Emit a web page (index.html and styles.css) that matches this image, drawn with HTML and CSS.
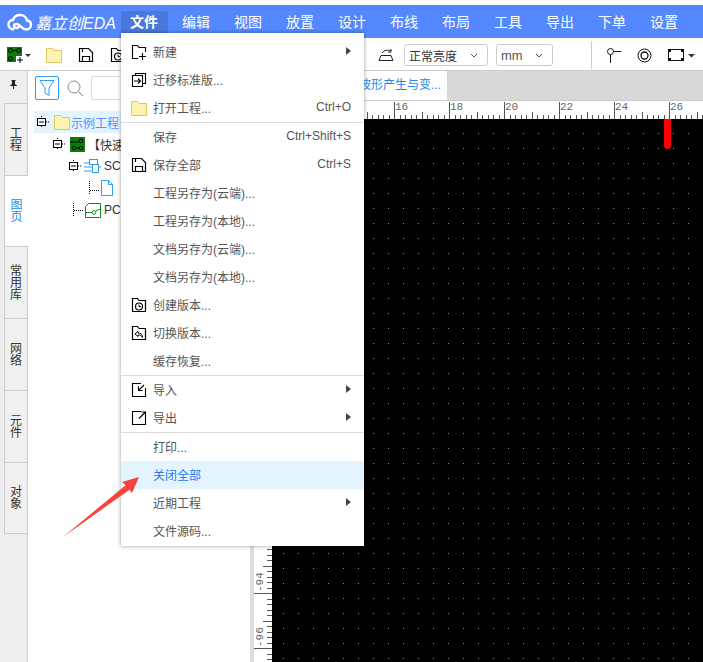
FILE: index.html
```html
<!DOCTYPE html>
<html lang="zh-CN">
<head>
    <meta charset="UTF-8">
    <title>嘉立创EDA</title>
    <link rel="stylesheet" href="styles.css">
</head>
<body>

    <svg class="defs" width="0" height="0">
        <defs>
            <symbol id="folder" viewBox="0 0 16 16">
                <path d="M.5 1.500h6l1.500 2h7.500v12H.5z" fill="#fdf3b0" stroke="#e0c565"/>
            </symbol>
            <symbol id="expander" viewBox="0 0 12 12">
                <path d="M4.500 0v2M4.500 10v2M9 6h3" stroke="#000" stroke-dasharray="1 1"/>
                <rect x=".5" y="2.500" width="8" height="7" fill="#fff" stroke="#000"/>
                <path d="M2 6h5" stroke="#000"/>
            </symbol>
            <symbol id="file-box" viewBox="0 0 16 16">
                <path d="M1.500 4V1.500h5l1.500 2h6.500v11H1.500z" fill="none" stroke="#000" stroke-width="1.200"/>
            </symbol>
            <symbol id="clock-box" viewBox="0 0 16 16">
                <use href="#file-box"/>
                <circle cx="8" cy="9.500" r="3.500" fill="none" stroke="#000" stroke-width="1.200"/>
                <path d="M8 7.500v2.200h2" fill="none" stroke="#000"/>
            </symbol>
            <symbol id="save" viewBox="0 0 16 16">
                <path d="M1.500 1.500h9l4 4v9h-13zM4.500 14.500v-5h7v5M4.500 2v3" fill="none" stroke="#000" stroke-width="1.200"/>
            </symbol>
            <pattern id="ticks-h" width="55" height="18" patternUnits="userSpaceOnUse" x="30">
                <path d="M.5 1v17M6 14v4M11.500 14v4M17 14v4M22.500 14v4M28 11v7M33.500 14v4M39 14v4M44.500 14v4M50 14v4" stroke="#555" fill="none" shape-rendering="crispEdges"/>
            </pattern>
            <pattern id="ticks-v" width="18" height="55" patternUnits="userSpaceOnUse" y="34">
                <path d="M0 .5h18M13 6h5M13 11.500h5M13 17h5M13 22.500h5M9 28h9M13 33.500h5M13 39h5M13 44.500h5M13 50h5" stroke="#555" fill="none" shape-rendering="crispEdges"/>
            </pattern>
            <pattern id="grid-dots" width="15" height="15" patternUnits="userSpaceOnUse" x="11" y="14">
                <rect width="1" height="1" fill="#888"/>
            </pattern>
        </defs>
    </svg>

    <div class="topbar">
        <div class="logo">
            <svg class="logo-cloud" width="26" height="18" viewBox="0 0 26 18">
                <path d="M7 16.500c-3 0-5.500-2-5.500-5s2.200-4.500 4.500-4.500c1-3 3.500-5 7-5 3.800 0 6.500 2.500 7 5.500 2.200.3 4 2 4 4.300 0 2.500-2 4.700-5 4.700-4 0-6-5.500-9.500-5.500-1.500 0-2.500 1-2.500 2s1 2 2.500 2c1 0 2-.5 3-1.500" fill="none" stroke="#fff" stroke-width="2.400"/>
            </svg>
            <span class="logo-text">嘉立创EDA</span>
        </div>
        <nav class="main-menu">
            <span class="main-item active">文件</span>
            <span class="main-item">编辑</span>
            <span class="main-item">视图</span>
            <span class="main-item">放置</span>
            <span class="main-item">设计</span>
            <span class="main-item">布线</span>
            <span class="main-item">布局</span>
            <span class="main-item">工具</span>
            <span class="main-item">导出</span>
            <span class="main-item">下单</span>
            <span class="main-item">设置</span>
        </nav>
    </div>

    <div class="toolbar">
        <div class="tool-group">
            <svg width="24" height="16" viewBox="0 0 24 16">
                <rect width="15" height="15" fill="#0a7d0a"/>
                <circle cx="3.500" cy="3.500" r="2" fill="none" stroke="#000"/>
                <circle cx="11.500" cy="3.500" r="2" fill="none" stroke="#000"/>
                <circle cx="3.500" cy="11.500" r="2" fill="none" stroke="#000"/>
                <path d="M5.500 3.500h4" stroke="#000"/>
                <rect x="9" y="9" width="8" height="7" fill="#fff"/>
                <path d="M10 13h6M13 10v6" stroke="#000"/>
                <path d="M18 7h6l-3 3z" fill="#333"/>
            </svg>
            <svg class="tool-folder" width="16" height="16"><use href="#folder"/></svg>
            <svg class="tool-save" width="16" height="16"><use href="#save"/></svg>
            <svg class="tool-save" width="16" height="16"><use href="#clock-box"/></svg>
        </div>
        <div class="tool-group right">
            <svg width="16" height="14" viewBox="0 0 16 14">
                <path d="M1 12.500h14l-2-5H3zM4 5c2-3 6-3.500 9-2M13 1v3h-3" fill="none" stroke="#222"/>
            </svg>
            <span class="tool-select brightness">正常亮度<svg class="chev" width="8" height="5" viewBox="0 0 8 5"><path d="M1 1l3 3 3-3" fill="none" stroke="#555"/></svg></span>
            <span class="tool-select unit">mm<svg class="chev" width="8" height="5" viewBox="0 0 8 5"><path d="M1 1l3 3 3-3" fill="none" stroke="#555"/></svg></span>
            <span class="tool-sep"></span>
            <svg class="tool-pin" width="16" height="16" viewBox="0 0 16 16">
                <circle cx="4.500" cy="4.500" r="3" fill="none" stroke="#111"/>
                <path d="M7.500 4.500H15M4.500 7.500V16" stroke="#111"/>
            </svg>
            <svg class="tool-via" width="15" height="15" viewBox="0 0 15 15">
                <circle cx="7.500" cy="7.500" r="6.500" fill="none" stroke="#111"/>
                <circle cx="7.500" cy="7.500" r="3.500" fill="none" stroke="#111" stroke-width="1.300"/>
            </svg>
            <svg class="tool-frame" width="27" height="13" viewBox="0 0 27 13">
                <rect x=".5" y=".5" width="15" height="11" fill="none" stroke="#111"/>
                <path d="M1 1h2v2H1zM13 1h2v2h-2zM1 9h2v2H1zM13 9h2v2h-2z" fill="#111"/>
                <path d="M20 5h7l-3.500 3.500z" fill="#333"/>
            </svg>
        </div>
    </div>

    <div class="workspace">
        <aside class="side-tabs">
            <div class="pin-row">
                <svg width="7" height="9" viewBox="0 0 7 9"><path d="M1.500 0h4v1l-.5.500V4L7 5.500V6H4v3H3V6H0v-.5L2 4V1.500L1.500 1z" fill="#222"/></svg>
            </div>
            <div class="side-tab">工程</div>
            <div class="side-tab active">图页</div>
            <div class="side-tab">常用库</div>
            <div class="side-tab">网络</div>
            <div class="side-tab">元件</div>
            <div class="side-tab">对象</div>
        </aside>

        <section class="tree-panel">
            <div class="tree-tools">
                <span class="filter-btn">
                    <svg width="16" height="18" viewBox="0 0 16 18"><path d="M1 1.500h14L10 9v7.500L6 14V9z" fill="none" stroke="#2f9bf5"/></svg>
                </span>
                <svg class="search-icon" width="17" height="17" viewBox="0 0 17 17">
                    <circle cx="7" cy="7" r="6" fill="none" stroke="#888"/>
                    <path d="M11.500 11.500L16 16" stroke="#888"/>
                </svg>
                <span class="search-box"></span>
            </div>
            <ul class="tree">
                <li class="tree-row level-0 selected">
                    <svg class="exp" width="12" height="12"><use href="#expander"/></svg>
                    <svg width="16" height="16"><use href="#folder"/></svg>
                    <span class="tree-name">示例工程</span>
                </li>
                <li class="tree-row level-1">
                    <svg class="exp" width="12" height="12"><use href="#expander"/></svg>
                    <svg width="15" height="15" viewBox="0 0 15 15">
                        <rect width="15" height="15" fill="#0a7d0a"/>
                        <circle cx="4" cy="11" r="1.800" fill="none" stroke="#000"/>
                        <circle cx="11" cy="4" r="1.800" fill="none" stroke="#000"/>
                        <circle cx="11" cy="11" r="1.800" fill="none" stroke="#000"/>
                        <path d="M0 5h9M6 11h3" stroke="#000"/>
                    </svg>
                    <span class="tree-name">【快速</span>
                </li>
                <li class="tree-row level-2">
                    <svg class="exp" width="12" height="12"><use href="#expander"/></svg>
                    <svg width="17" height="16" viewBox="0 0 17 16">
                        <rect x="5.500" y="1.500" width="8" height="5" fill="none" stroke="#2f9bf5"/>
                        <rect x="8.500" y="6.500" width="6" height="8" fill="none" stroke="#2f9bf5"/>
                        <path d="M0 5h5M0 9h8M0 13h8M14.500 9H17" stroke="#2f9bf5"/>
                    </svg>
                    <span class="tree-name">SC</span>
                </li>
                <li class="tree-row level-3">
                    <svg width="10" height="14" viewBox="0 0 10 14"><path d="M.5 0v14M1 9.500h9" stroke="#000" stroke-dasharray="1 1"/></svg>
                    <svg width="12" height="16" viewBox="0 0 12 16"><path d="M.5.500h7l4 4v11H.5zM7.500.500v4h4" fill="none" stroke="#2f9bf5"/></svg>
                </li>
                <li class="tree-row level-4">
                    <svg width="10" height="14" viewBox="0 0 10 14"><path d="M.5 0v14M1 7.500h9" stroke="#000" stroke-dasharray="1 1"/></svg>
                    <svg width="16" height="15" viewBox="0 0 16 15">
                        <path d="M.5 3.500l3-3h12v14H.5z" fill="none" stroke="#0a8a1a"/>
                        <circle cx="9" cy="9.500" r="1.800" fill="none" stroke="#0a8a1a"/>
                        <path d="M.5 9.500H7M11 8l4-2" stroke="#0a8a1a"/>
                    </svg>
                    <span class="tree-name pc">PC</span>
                </li>
            </ul>
        </section>

        <div class="splitter"></div>

        <section class="editor">
            <div class="doc-tabs">
                <span class="doc-tab">波形产生与变...</span>
            </div>
            <div class="ruler-top">
                <svg width="449" height="18">
                    <rect width="449" height="18" fill="url(#ticks-h)"/>
                    <text x="141" y="9">16</text>
                    <text x="196" y="9">18</text>
                    <text x="251" y="9">20</text>
                    <text x="306" y="9">22</text>
                    <text x="361" y="9">24</text>
                    <text x="416" y="9">26</text>
                </svg>
            </div>
            <div class="canvas-row">
                <div class="ruler-left">
                    <svg width="18" height="543">
                        <rect width="18" height="543" fill="url(#ticks-v)"/>
                        <text transform="translate(9 473) rotate(-90)">-94</text>
                        <text transform="translate(9 528) rotate(-90)">-96</text>
                    </svg>
                </div>
                <div class="canvas">
                    <svg class="canvas-grid" width="431" height="543">
                        <rect width="431" height="543" fill="url(#grid-dots)"/>
                    </svg>
                    <span class="marker"></span>
                </div>
            </div>
        </section>
    </div>

    <div class="file-menu">
        <div class="menu-row">
            <svg class="menu-icon" width="16" height="16" viewBox="0 0 16 16">
                <path d="M7 14.500H1.500v-13h5l1.500 2h6.500V8M8 12.500h7M11.500 9v7" fill="none" stroke="#000" stroke-width="1.100"/>
            </svg>
            <span class="menu-label">新建</span><span class="menu-arrow"></span>
        </div>
        <div class="menu-row">
            <svg class="menu-icon" width="16" height="16" viewBox="0 0 16 16">
                <path d="M4.500 3.500v-2h10v10h-3M1.500 3.500h10v11h-10zM3 9h6M7 6.500L9.500 9 7 11.500" fill="none" stroke="#000" stroke-width="1.100"/>
            </svg>
            <span class="menu-label">迁移标准版...</span>
        </div>
        <div class="menu-row">
            <svg class="menu-icon" width="16" height="16"><use href="#folder"/></svg>
            <span class="menu-label">打开工程...</span><span class="menu-key">Ctrl+O</span>
        </div>
        <div class="menu-sep"></div>
        <div class="menu-row">
            <span class="menu-label">保存</span><span class="menu-key">Ctrl+Shift+S</span>
        </div>
        <div class="menu-row">
            <svg class="menu-icon" width="16" height="16"><use href="#save"/></svg>
            <span class="menu-label">保存全部</span><span class="menu-key">Ctrl+S</span>
        </div>
        <div class="menu-row"><span class="menu-label">工程另存为(云端)...</span></div>
        <div class="menu-row"><span class="menu-label">工程另存为(本地)...</span></div>
        <div class="menu-row"><span class="menu-label">文档另存为(云端)...</span></div>
        <div class="menu-row"><span class="menu-label">文档另存为(本地)...</span></div>
        <div class="menu-row">
            <svg class="menu-icon" width="16" height="16"><use href="#clock-box"/></svg>
            <span class="menu-label">创建版本...</span>
        </div>
        <div class="menu-row">
            <svg class="menu-icon" width="16" height="16" viewBox="0 0 16 16">
                <use href="#file-box"/>
                <path d="M7 6.500L4 9l3 2.500V10c2 0 3.500.5 4.500 2.500 0-3-1.500-4.500-4.500-4.500z" fill="none" stroke="#000"/>
            </svg>
            <span class="menu-label">切换版本...</span>
        </div>
        <div class="menu-row"><span class="menu-label">缓存恢复...</span></div>
        <div class="menu-sep"></div>
        <div class="menu-row">
            <svg class="menu-icon" width="16" height="16" viewBox="0 0 16 16">
                <path d="M10 1.500H1.500v13h13V6M13 3L7.500 8.500M7.500 4.500v4h4" fill="none" stroke="#000" stroke-width="1.100"/>
            </svg>
            <span class="menu-label">导入</span><span class="menu-arrow"></span>
        </div>
        <div class="menu-row">
            <svg class="menu-icon" width="16" height="16" viewBox="0 0 16 16">
                <path d="M10 1.500H1.500v13h13V6M8 8.500L14 2.500M10.500 2H14.500v4" fill="none" stroke="#000" stroke-width="1.100"/>
            </svg>
            <span class="menu-label">导出</span><span class="menu-arrow"></span>
        </div>
        <div class="menu-sep"></div>
        <div class="menu-row"><span class="menu-label">打印...</span></div>
        <div class="menu-row hover"><span class="menu-label">关闭全部</span></div>
        <div class="menu-row"><span class="menu-label">近期工程</span><span class="menu-arrow"></span></div>
        <div class="menu-row"><span class="menu-label">文件源码...</span></div>
    </div>

    <svg class="callout" width="80" height="64" viewBox="0 0 80 64">
        <path d="M0 61L62.600 9.200 59 6 76 1 69 17 66.400 13.800z" fill="#f8423c"/>
    </svg>

</body>
</html>
```

FILE: styles.css
```css
* {
    box-sizing: border-box;
}
html, body {
    height: 100%;
}
body {
    margin: 0;
    padding-top: 5px;
    overflow: hidden;
    background: #fff;
    color: #444;
    font-family: "Liberation Sans", "Noto Sans CJK SC", sans-serif;
    font-size: 12px;
    position: relative;
}
svg {
    display: block;
    flex: none;
}
.defs {
    position: absolute;
}

/* top menu */
.topbar {
    height: 33px;
    background: #5588ff;
    display: flex;
    color: #fff;
    overflow: hidden;
}
.logo {
    width: 121px;
    flex: none;
    padding-left: 7px;
    display: flex;
    align-items: center;
    gap: 2px;
}
.logo-text {
    font-size: 16px;
    font-style: italic;
    white-space: nowrap;
}
.main-menu {
    display: flex;
    gap: 5px;
    padding-top: 6px;
}
.main-item {
    width: 47px;
    height: 22px;
    flex: none;
    line-height: 22px;
    padding-left: 9px;
    font-size: 14px;
}
.main-item.active {
    background: #4a78dc;
    font-weight: bold;
    border-radius: 2px 2px 0 0;
}

/* toolbar */
.toolbar {
    height: 33px;
    border-bottom: 1px solid #ccc;
    display: flex;
    align-items: center;
    justify-content: space-between;
    padding: 2px 8px 0 7px;
}
.tool-group {
    display: flex;
    align-items: center;
}
.tool-folder {
    margin-left: 15px;
}
.tool-save {
    margin-left: 16px;
}
.tool-select {
    height: 22px;
    border: 1px solid #ccc;
    border-radius: 3px;
    display: flex;
    align-items: center;
    justify-content: space-between;
    padding: 0 9px 0 4px;
    color: #333;
}
.tool-select.brightness {
    width: 84px;
    margin-left: 10px;
}
.tool-select.unit {
    width: 57px;
    margin-left: 8px;
    color: #555;
    font-size: 13px;
}
.tool-sep {
    width: 1px;
    height: 28px;
    background: #ccc;
    margin: 0 14px 0 38px;
}
.tool-via {
    margin-left: 15px;
}
.tool-frame {
    margin-left: 16px;
}

/* main area */
.workspace {
    height: 591px;
    display: flex;
}
.side-tabs {
    width: 28px;
    flex: none;
    background: #eee;
    border-right: 1px solid #ccc;
}
.pin-row {
    height: 32px;
    padding: 9px 0 0 10px;
}
.side-tab {
    width: 24px;
    height: 72px;
    margin-left: 4px;
    margin-right: -1px;
    background: #f0f0f0;
    border: 1px solid #ccc;
    border-bottom: 0;
    display: flex;
    align-items: center;
    justify-content: center;
    text-align: center;
    line-height: 12px;
    padding: 0 5px;
    color: #333;
}
.side-tab:last-child {
    border-bottom: 1px solid #ccc;
}
.side-tab.active {
    height: 71px;
    background: #fff;
    border-right: 0;
    color: #1e88f0;
}
.tree-panel {
    width: 222px;
    flex: none;
    overflow: hidden;
}
.tree-tools {
    height: 40px;
    display: flex;
    align-items: flex-start;
    padding: 5px 0 0 7px;
}
.filter-btn {
    width: 24px;
    height: 24px;
    border: 1px solid #2f9bf5;
    border-radius: 2px;
    display: flex;
    align-items: center;
    justify-content: center;
}
.search-icon {
    margin: 4px 0 0 8px;
}
.search-box {
    width: 120px;
    height: 24px;
    margin-left: 7px;
    border: 1px solid #ddd;
    border-radius: 2px;
}
.tree {
    list-style: none;
    margin: 0;
    padding: 0 0 0 6px;
}
.tree-row {
    height: 22px;
    display: flex;
    align-items: center;
    gap: 5px;
    white-space: nowrap;
    color: #333;
}
.tree-row.selected {
    background: #e4f4fe;
    color: #5a8dff;
}
.level-0 {
    padding-left: 3px;
}
.level-0 .tree-name {
    margin-left: -4px;
}
.level-1 {
    padding-left: 19px;
}
.level-1 .tree-name {
    margin-left: -2px;
}
.level-2 {
    padding-left: 35px;
    gap: 3px;
}
.level-3 {
    padding-left: 55px;
    gap: 2px;
}
.level-4 {
    padding-left: 39px;
    gap: 2px;
}
.level-4 .tree-name {
    margin-left: 1px;
}
.exp {
    margin-top: -1px;
}

/* editor */
.splitter {
    width: 4px;
    flex: none;
    background: #ddd;
}
.editor {
    flex: 1;
    min-width: 0;
    display: flex;
    flex-direction: column;
}
.doc-tabs {
    height: 30px;
    flex: none;
    background: #d8d8d8;
    border-bottom: 1px solid #ccc;
}
.doc-tab {
    display: block;
    width: 193px;
    height: 29px;
    background: #fff;
    color: #1e88f0;
    line-height: 29px;
    text-align: right;
    padding-right: 6px;
}
.ruler-top {
    height: 18px;
    flex: none;
    background: #fff;
}
.ruler-top text, .ruler-left text {
    font-family: "Liberation Mono", monospace;
    font-size: 11px;
    fill: #666;
}
.canvas-row {
    flex: 1;
    display: flex;
    min-height: 0;
}
.ruler-left {
    width: 18px;
    flex: none;
}
.canvas {
    flex: 1;
    position: relative;
    background: #000;
}
.marker {
    position: absolute;
    left: 392px;
    top: 0;
    width: 7px;
    height: 30px;
    background: #f00;
    border-radius: 0 0 3.5px 3.5px;
}

/* file menu */
.file-menu {
    position: absolute;
    left: 121px;
    top: 33px;
    width: 243px;
    padding: 5px 0 1px;
    background: #fff;
    box-shadow: 0 0 4px rgba(0, 0, 0, 0.4);
}
.menu-row {
    height: 28px;
    display: flex;
    align-items: center;
    padding: 0 13px 2px 32px;
    position: relative;
    color: #555;
}
.menu-row.hover {
    background: #e4f4fe;
    color: #1e78f0;
}
.menu-icon {
    position: absolute;
    left: 10px;
    top: 6px;
}
.menu-label {
    flex: 1;
}
.menu-key {
    color: #555;
}
.menu-arrow {
    width: 0;
    height: 0;
    border-left: 5px solid #444;
    border-top: 4px solid transparent;
    border-bottom: 4px solid transparent;
}
.menu-sep {
    height: 1px;
    background: #ddd;
}
.callout {
    position: absolute;
    left: 63px;
    top: 476px;
}
```
